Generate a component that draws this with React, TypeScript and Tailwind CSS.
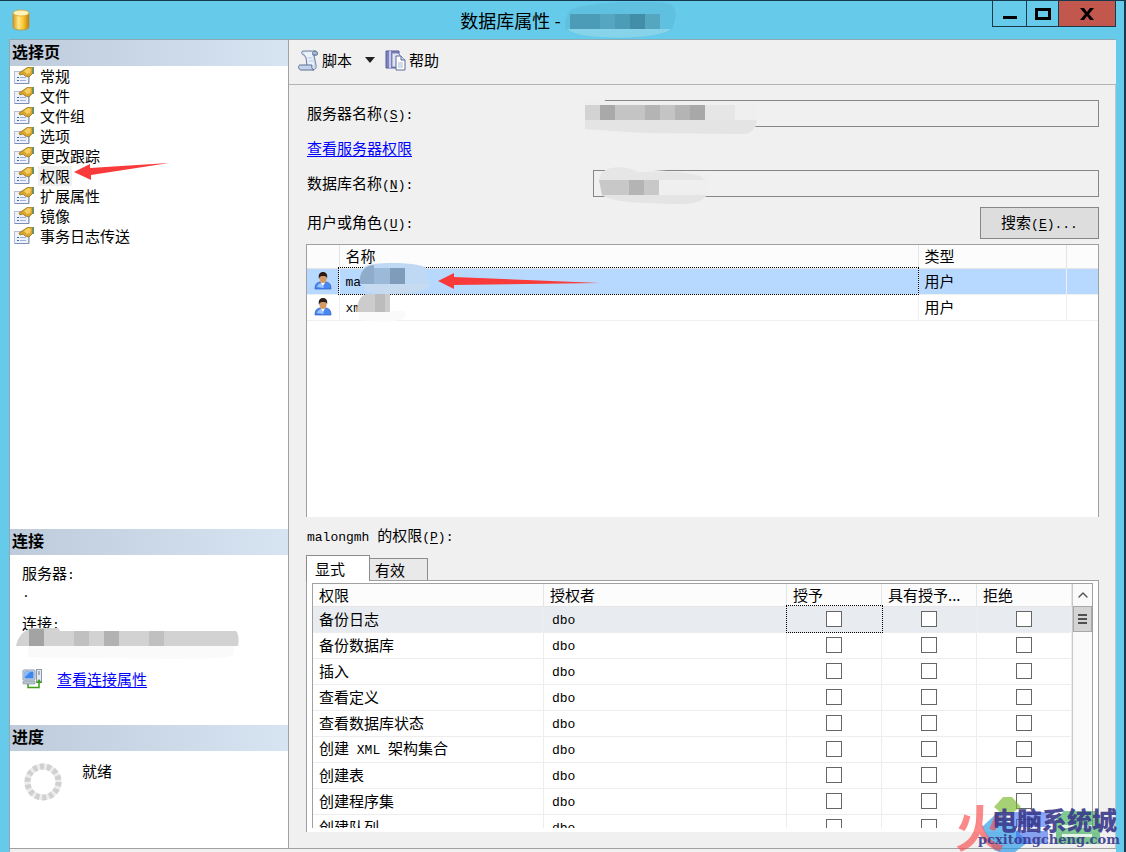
import React from "react";
import { ChevronUp } from "lucide-react";

const pages = [
  "常规",
  "文件",
  "文件组",
  "选项",
  "更改跟踪",
  "权限",
  "扩展属性",
  "镜像",
  "事务日志传送",
];

const users = [
  { name: "ma", type: "用户", selected: true },
  { name: "xm", type: "用户", selected: false },
];

const permissions = [
  "备份日志",
  "备份数据库",
  "插入",
  "查看定义",
  "查看数据库状态",
  "创建 XML 架构集合",
  "创建表",
  "创建程序集",
  "创建队列",
];

const grants = ["授予", "具有授予", "拒绝"];

const Mono = ({ children }: { children: React.ReactNode }) => (
  <span className="whitespace-pre font-['Liberation_Mono',monospace] text-[13px]">
    {children}
  </span>
);

const Hotkey = ({ letter, end = ":" }: { letter: string; end?: string }) => (
  <Mono>
    (<span className="underline underline-offset-2">{letter}</span>){end}
  </Mono>
);

/* Icons */

const DatabaseIcon = () => (
  <svg width="18" height="22" viewBox="0 0 18 22" aria-hidden="true">
    <defs>
      <linearGradient id="db" x1="0" x2="1">
        <stop offset="0" stopColor="#d9971a" />
        <stop offset="0.35" stopColor="#ffe98a" />
        <stop offset="0.65" stopColor="#f7c52f" />
        <stop offset="1" stopColor="#c07c0c" />
      </linearGradient>
    </defs>
    <path d="M1 4v14c0 4 16 4 16 0V4z" fill="url(#db)" stroke="#b98a2c" strokeWidth="0.7" />
    <ellipse cx="9" cy="4" rx="8" ry="3" fill="#fff3b8" stroke="#d8a638" strokeWidth="0.8" />
  </svg>
);

const PageIcon = () => (
  <svg width="20" height="18" viewBox="0 0 20 18" className="shrink-0" aria-hidden="true">
    <rect x="0.5" y="4.5" width="14" height="12" fill="#eef2fb" stroke="#b4bfd6" />
    <path d="M1 16.5h14V5" fill="none" stroke="#7d8fb8" />
    <path d="M3 10.5h2M3 13.5h2" stroke="#4666b8" />
    <path d="M6 10.5h6M6 13.5h6" stroke="#9fb0d8" />
    <path d="M5 6l6-4 3-2h5v6l-4 4-4-1-2-2-3 1z" fill="#d9a52b" stroke="#8b6a1d" strokeWidth="0.7" />
    <path d="M10 4l4-3 3 1-1 4-3 1z" fill="#f3cf62" />
    <path d="M18 0h2v7h-2z" fill="#6f9060" />
  </svg>
);

const ScriptIcon = () => (
  <svg width="21" height="21" viewBox="0 0 21 21" aria-hidden="true">
    <path d="M5 1h12c3 0 3 4 1 4h-2l2 10c1 4-2 5-4 5L9 16 8 8 6 5C3 5 3 1 5 1z" fill="#cfdcf0" stroke="#71839f" />
    <path d="M6 2h9l-1 3 2 10H10L9 7 7 5z" fill="#eaf1fb" />
    <path d="M15 5h4c1-2 0-4-2-4s-3 2-2 4z" fill="#a9bbd8" stroke="#5f7397" />
    <path d="M2 15h12c-1 2 0 4 2 5H3c-3 0-3-5-1-5z" fill="#c3d3eb" stroke="#5f7397" />
    <path d="M10 8h4M11 11h4" stroke="#b5c6e2" />
  </svg>
);

const HelpIcon = () => (
  <svg width="21" height="21" viewBox="0 0 21 21" aria-hidden="true">
    <path d="M1 1h13v17H1z" fill="#7f83bd" stroke="#595d9c" />
    <path d="M4 1h2v17H4z" fill="#c7c9ea" />
    <path d="M7 3h6l2 2v12H7z" fill="#dfe4f5" stroke="#7177a6" strokeWidth="0.8" />
    <path d="M11 6h5l4 4v10h-9z" fill="#fff" stroke="#586a96" />
    <path d="M16 6v4h4" fill="#cdd8ee" stroke="#586a96" />
    <path d="M13 13h5M13 15h5M13 17h5" stroke="#a9b8d8" />
  </svg>
);

const UserIcon = () => (
  <svg width="18" height="18" viewBox="0 0 18 18" className="mx-auto" aria-hidden="true">
    <path d="M1 17c0-5 2-7 6-7h4c4 0 6 2 6 7z" fill="#4b87f0" stroke="#2b5cc4" strokeWidth="0.7" />
    <path d="M3 15c1-3 3-4 5-4l2 5z" fill="#9cc4ff" />
    <path d="M6 9l3 5 3-5z" fill="#fff" />
    <ellipse cx="9" cy="6.500" rx="3.500" ry="4.500" fill="#d39a63" />
    <path d="M5 7C4 2 6 0 9 0s5 2 4 7c0-3-2-3-4-3S6 4 5 7z" fill="#2b1c16" />
  </svg>
);

const ConnectionIcon = () => (
  <svg width="21" height="20" viewBox="0 0 21 20" aria-hidden="true">
    <rect x="1" y="1" width="12" height="10" rx="1" fill="#dce4ee" stroke="#8a99ad" />
    <rect x="2.500" y="2.500" width="9" height="7" fill="#3c86ee" />
    <path d="M3 3h5L3 8z" fill="#8dbcff" />
    <path d="M1 12h12v3H1z" fill="#b9c4d2" stroke="#8593a6" strokeWidth="0.6" />
    <rect x="14.500" y="0.500" width="5" height="13" fill="#e6ebf1" stroke="#8d99a8" />
    <path d="M16 3h2M16 5h2" stroke="#68788e" />
    <path d="M6 15v3.500h11V13" fill="none" stroke="#3f9b1e" strokeWidth="1.500" />
    <path d="M14 14l3-4 3 4z" fill="#3f9b1e" />
  </svg>
);

const Spinner = () => (
  <svg width="38" height="38" viewBox="-19 -19 38 38" aria-hidden="true">
    <circle r="15.500" fill="none" stroke="#ececec" strokeWidth="6" />
    <circle r="15.500" fill="none" stroke="#d0d0d0" strokeWidth="6" strokeDasharray="4.100 2.856" />
  </svg>
);

/* Smudges that hide private names */

const TitleSmudge = () => (
  <svg width="111" height="36" viewBox="0 0 111 36" aria-hidden="true">
    <path d="M5 8C20 0 98-4 107 3c6 5 4 15 0 24-4 10-96 11-107 0C-1 20 2 12 5 8z" fill="#5fc1df" />
    <path d="M2 27h104c-10 11-94 12-104 0z" fill="#86d3ea" />
    <path d="M5 12h90v15H5z" fill="#4c9cb7" />
    <path d="M35 12h15v15H35zM80 12h15v15H80z" fill="#55a6c0" />
    <path d="M65 12h15v15H65z" fill="#428da8" />
  </svg>
);

const ServerSmudge = () => (
  <svg width="172" height="38" viewBox="0 0 172 38" className="absolute -left-2 -top-1" aria-hidden="true">
    <path d="M0 4l20-1v3h152v18l-2 8-14 6-121-1-35-3z" fill="#efefef" />
    <path d="M0 24h172c-1 7-5 14-14 14L60 37 0 33z" fill="#e4e4e4" />
    <path d="M0 9h150v15H0z" fill="#e6e6e6" />
    <path d="M0 9h15v15H0z" fill="#d3d3d3" />
    <path d="M15 9h15v15H15z" fill="#a9a9a9" />
    <path d="M30 9h60v15H30z" fill="#c4c4c4" />
    <path d="M60 9h15v15H60zM90 9h30v15H90z" fill="#b4b4b4" />
    <path d="M105 9h15v15h-15z" fill="#a8a8a8" />
  </svg>
);

const DatabaseSmudge = () => (
  <svg width="112" height="38" viewBox="0 0 112 38" className="absolute left-1 -top-1" aria-hidden="true">
    <path d="M0 8L30 2l80 6v20l-14 8H60L4 27z" fill="#efefef" />
    <path d="M4 8c6-9 28-8 36-2 20 0 60-2 68 8H2z" fill="#e6e6e6" />
    <path d="M4 29h106c-8 12-30 9-60 8-24 0-38-4-46-8z" fill="#e4e4e4" />
    <path d="M2 14h60v15H5z" fill="#c8c8c8" />
    <path d="M32 14h15v15H32z" fill="#b4b4b4" />
  </svg>
);

const ConnectionSmudge = () => (
  <svg width="226" height="36" viewBox="0 0 226 36" className="absolute -left-2 top-[14px]" aria-hidden="true">
    <path d="M14 19h206v8c-4 5-20 6-206 3z" fill="#fafafa" />
    <path d="M2 19C4 9 10 3 18 1h26l2 3h176c3 3 3 10 2 15z" fill="#d2d2d2" />
    <path d="M15 2h15v17H15z" fill="#a3a3a3" />
    <path d="M60 4h15v15H60zM135 4h15v15h-15z" fill="#c0c0c0" />
    <path d="M90 4h15v15H90z" fill="#b2b2b2" />
  </svg>
);

const UserSmudge = ({ selected }: { selected: boolean }) =>
  selected ? (
    <svg width="76" height="34" viewBox="0 0 76 34" className="absolute left-[14px] -top-2" aria-hidden="true">
      <path d="M4 5C12-1 60 0 66 6l4 15c0 12-50 14-66 7z" fill="#bfd9f5" />
      <path d="M4 22h66c-2 12-50 12-64 7z" fill="#c6dbf0" />
      <path d="M0 22C-1 12 3 4 14 3v3h31v16z" fill="#8fadca" />
      <path d="M14 6h16v16H14z" fill="#9bb9d8" />
      <path d="M30 6h15v16H30z" fill="#7f9dba" />
    </svg>
  ) : (
    <svg width="50" height="32" viewBox="0 0 50 32" className="absolute left-[11px] -top-1" aria-hidden="true">
      <path d="M2 19h46v6c-6 6-30 5-46 3z" fill="#fafafa" />
      <path d="M0 20C0 9 4 3 10 2h23v18z" fill="#cccccc" />
      <path d="M18 2h10v18H18z" fill="#bcbcbc" />
    </svg>
  );

const SectionTitle = ({ children }: { children: React.ReactNode }) => (
  <h2 className="flex h-[26px] items-center bg-gradient-to-r from-[#becbda] to-[#d7e4f2] px-[2px] pb-1 text-base font-bold">
    {children}
  </h2>
);

const Sidebar = () => (
  <aside className="flex w-[279px] shrink-0 flex-col border-r border-[#a0a0a0] bg-white">
    <section className="flex-1">
      <SectionTitle>选择页</SectionTitle>
      <ul className="pl-1">
        {pages.map((page) => (
          <li key={page}>
            <button type="button" className="flex h-5 items-center gap-1 leading-5">
              <PageIcon />
              <span
                className={
                  page === "权限" ? "relative bg-[#f0f0f0] px-[2px]" : "px-[2px]"
                }
              >
                {page}
                {page === "权限" && (
                  <svg width="96" height="18" viewBox="0 0 96 18" className="absolute left-9 -top-1" aria-hidden="true">
                    <path d="M0 10L16 2v4L95 1 17 13v5z" fill="#f93a3a" />
                  </svg>
                )}
              </span>
            </button>
          </li>
        ))}
      </ul>
    </section>

    <section>
      <SectionTitle>连接</SectionTitle>
      <div className="px-3 pb-9 pt-2 leading-5">
        <p className="h-5">
          服务器<Mono>:</Mono>
        </p>
        <p className="h-4 leading-4">
          <Mono>.</Mono>
        </p>
        <p className="relative mt-[14px] h-5">
          连接<Mono>:</Mono>
          <ConnectionSmudge />
        </p>
        <div className="mt-9 flex items-center gap-[14px]">
          <ConnectionIcon />
          <a href="#connection" className="text-[#0000ff] underline underline-offset-2">
            查看连接属性
          </a>
        </div>
      </div>
    </section>

    <section className="h-[123px]">
      <SectionTitle>进度</SectionTitle>
      <div className="flex gap-5 pl-[14px] pt-3">
        <Spinner />
        <span className="leading-4">就绪</span>
      </div>
    </section>
  </aside>
);

const UsersTable = () => (
  <div className="min-h-0 flex-[68] overflow-hidden border border-b-0 border-[#a0a0a0] bg-white">
    <table className="w-full table-fixed border-collapse leading-5">
      <colgroup>
        <col className="w-8" />
        <col />
        <col className="w-[148px]" />
        <col className="w-8" />
      </colgroup>
      <thead>
        <tr className="h-[23px] border-b border-[#e5e5e5] bg-[#fcfcfc] text-left">
          <td className="border-r border-[#e5e5e5]" />
          <th className="border-r border-[#e5e5e5] px-[6px] font-normal">名称</th>
          <th className="border-r border-[#e5e5e5] px-[6px] font-normal">类型</th>
          <td />
        </tr>
      </thead>
      <tbody>
        {users.map((user) => (
          <tr
            key={user.name}
            className={
              user.selected
                ? "h-[26px] border-b border-[#f0f0f0] bg-[#b7d9ff]"
                : "h-[26px] border-b border-[#f0f0f0]"
            }
          >
            <td className="border-r border-[#f0f0f0]">
              <UserIcon />
            </td>
            <td
              className={
                user.selected
                  ? "border-r border-[#f0f0f0] px-[6px] outline-1 outline-dotted outline-black"
                  : "border-r border-[#f0f0f0] px-[6px]"
              }
            >
              <div className="relative">
                <Mono>{user.name}</Mono>
                <UserSmudge selected={user.selected} />
                {user.selected && (
                  <svg width="166" height="18" viewBox="0 0 166 18" className="absolute left-[92px] top-[2px]" aria-hidden="true">
                    <path d="M0 9L16 1v4l146 6-146 2v4z" fill="#f93a3a" />
                  </svg>
                )}
              </div>
            </td>
            <td className="border-r border-[#f0f0f0] px-[6px]">{user.type}</td>
            <td />
          </tr>
        ))}
      </tbody>
    </table>
  </div>
);

const PermissionName = ({ name }: { name: string }) => (
  <>
    {name.split(/( XML )/).map((part) =>
      part === " XML " ? <Mono key={part}>{part}</Mono> : part
    )}
  </>
);

const PermissionsTable = () => (
  <div className="min-h-0 flex-[63]">
    <div className="flex h-full border border-b-0 border-[#a0a0a0] bg-white px-[5px] pb-1 pt-[2px]">
      <div className="flex min-w-0 flex-1 overflow-hidden border border-b-0 border-[#a0a0a0]">
        <div className="min-w-0 flex-1">
          <table className="w-full table-fixed border-collapse leading-5">
            <colgroup>
              <col />
              <col className="w-[243px]" />
              <col className="w-[95px]" />
              <col className="w-[95px]" />
              <col className="w-[95px]" />
            </colgroup>
            <thead>
              <tr className="h-[22px] border-b border-[#e5e5e5] bg-[#fcfcfc] text-left">
                <th className="border-r border-[#e5e5e5] px-[6px] font-normal">权限</th>
                <th className="border-r border-[#e5e5e5] px-[6px] font-normal">授权者</th>
                {grants.map((grant) => (
                  <th
                    key={grant}
                    className="whitespace-nowrap border-r border-[#e5e5e5] px-[6px] font-normal"
                  >
                    {grant}
                    {grant === "具有授予" && "..."}
                  </th>
                ))}
              </tr>
            </thead>
            <tbody>
              {permissions.map((name, row) => (
                <tr
                  key={name}
                  className={
                    row === 0
                      ? "h-[26px] border-b border-[#ededed] bg-[#e8ecf0]"
                      : "h-[26px] border-b border-[#ededed]"
                  }
                >
                  <td className="border-r border-[#ededed] px-[6px]">
                    <PermissionName name={name} />
                  </td>
                  <td className="border-r border-[#ededed] px-2">
                    <Mono>dbo</Mono>
                  </td>
                  {grants.map((grant, col) => (
                    <td
                      key={grant}
                      className={
                        row === 0 && col === 0
                          ? "border-r border-[#ededed] outline-1 outline-dotted outline-black"
                          : "border-r border-[#ededed]"
                      }
                    >
                      <input
                        type="checkbox"
                        aria-label={`${name} ${grant}`}
                        className="mx-auto block size-4 appearance-none border border-[#666666] bg-white checked:bg-[#666666]"
                      />
                    </td>
                  ))}
                </tr>
              ))}
            </tbody>
          </table>
        </div>
        <div className="flex w-5 shrink-0 flex-col border-l border-[#c8c8c8] bg-[#fafafa]">
          <button
            type="button"
            aria-label="向上滚动"
            className="flex h-[22px] items-center justify-center text-[#505050]"
          >
            <ChevronUp className="size-4" />
          </button>
          <div className="flex h-[26px] flex-col items-center justify-center gap-px border border-[#a8a8a8] bg-[#d4d4d4]">
            <span className="h-[3px] w-[9px] border-b border-[#d4d4d4] bg-[#505050]" />
            <span className="h-[3px] w-[9px] border-b border-[#d4d4d4] bg-[#505050]" />
            <span className="h-[3px] w-[9px] border-b border-[#d4d4d4] bg-[#505050]" />
          </div>
        </div>
      </div>
    </div>
  </div>
);

const Watermark = () => (
  <div className="pointer-events-none absolute bottom-0 right-0 h-14 w-[168px] overflow-hidden" aria-hidden="true">
    <svg width="168" height="56" viewBox="0 0 168 56" className="absolute inset-0">
      <path d="M38 11L47 1h9l9 10-9 6H45z" fill="#76b82a" opacity="0.65" />
      <path d="M26 31l16-15 30 30-18 14-16-6z" fill="#2196e8" opacity="0.65" />
      <path d="M55 16h38v15H55zM60 35h32v13H60z" fill="#3d6df0" opacity="0.6" />
      <path d="M108 15h32l4 8v25h-44V23z" fill="#3fae5a" opacity="0.65" />
      <path d="M106 29h12v3h-12zM124 29h12v3h-12zM106 38h30v3h-30z" fill="#e5f3e8" />
    </svg>
    <span className="absolute -left-px top-1 text-[50px] font-bold leading-[50px] text-[#fb4b4b] opacity-65">
      火
    </span>
    <span className="absolute left-9 top-[10px] whitespace-nowrap text-[25px] font-black leading-[26px] text-[#3a3a8c] opacity-90">
      电脑系统城
    </span>
    <span className="absolute left-[22px] top-[37px] whitespace-nowrap font-['DejaVu_Serif',serif] text-[13px] font-bold leading-[14px] text-[#3a3a8c] opacity-90">
      pcxitongcheng.com
    </span>
  </div>
);

const MainPane = () => (
  <main className="flex min-w-0 flex-1 flex-col bg-[#f0f0f0]">
    <div className="flex h-[45px] shrink-0 items-center border-b border-[#b4b4b4] pb-1 pl-[9px]">
      <button type="button" className="flex items-center gap-[3px]">
        <ScriptIcon />
        <span>脚本</span>
        <svg width="10" height="6" viewBox="0 0 10 6" className="ml-[10px]" aria-hidden="true">
          <path d="M0 0h10L5 6z" fill="#222" />
        </svg>
      </button>
      <button type="button" className="ml-[10px] flex items-center gap-[3px]">
        <HelpIcon />
        <span>帮助</span>
      </button>
    </div>

    <div className="flex min-h-0 flex-1 flex-col border-r border-[#c4c4c4] pb-4 pl-[17px] pr-4 pt-[15px]">
      <div className="flex h-[27px] shrink-0 items-center">
        <label htmlFor="server" className="w-[287px] shrink-0 pl-px">
          服务器名称
          <Hotkey letter="S" />
        </label>
        <div className="relative h-full flex-1">
          <input id="server" readOnly className="h-full w-full border border-[#868686] bg-[#f0f0f0] px-2" />
          <ServerSmudge />
        </div>
      </div>

      <div className="flex h-[43px] shrink-0 items-center pb-px pl-px">
        <a href="#server-permissions" className="text-[#0000ff] underline underline-offset-2">
          查看服务器权限
        </a>
      </div>

      <div className="flex h-[27px] shrink-0 items-center">
        <label htmlFor="database" className="w-[287px] shrink-0 pl-px">
          数据库名称
          <Hotkey letter="N" />
        </label>
        <div className="relative h-full flex-1">
          <input id="database" readOnly className="h-full w-full border border-[#868686] bg-[#f0f0f0] px-2" />
          <DatabaseSmudge />
        </div>
      </div>

      <div className="flex h-[47px] shrink-0 items-center justify-between pl-px pt-1">
        <span>
          用户或角色
          <Hotkey letter="U" />
        </span>
        <button type="button" className="h-8 w-[119px] border border-[#868686] bg-[#dddddd]">
          搜索
          <Hotkey letter="E" end="..." />
        </button>
      </div>

      <UsersTable />

      <div className="flex h-[38px] shrink-0 items-center pl-px">
        <span>
          <Mono>malongmh </Mono>
          的权限
          <Hotkey letter="P" />
        </span>
      </div>

      <div role="tablist" className="flex h-[25px] shrink-0 items-end">
        <button
          type="button"
          role="tab"
          aria-selected="true"
          className="relative -mb-px h-[26px] w-16 border border-b-0 border-[#8c8c8c] bg-white pl-2 text-left leading-5"
        >
          显式
        </button>
        <button
          type="button"
          role="tab"
          aria-selected="false"
          className="h-[22px] w-[58px] border border-b-0 border-l-0 border-[#8c8c8c] bg-[#e9e9e9] pl-[5px] text-left leading-5"
        >
          有效
        </button>
      </div>
      <PermissionsTable />
    </div>
  </main>
);

export default function App() {
  return (
    <div className="relative flex h-screen w-full flex-col overflow-hidden border-r-2 border-t border-[#17394f] bg-[#66cbea] font-['Noto_Sans_CJK_SC',sans-serif] text-[15px] text-black">
      <header className="grid h-[38px] shrink-0 grid-cols-[1fr_auto_1fr] items-center pl-3 pr-2">
        <DatabaseIcon />
        <div className="ml-2 flex items-center gap-1">
          <h1 className="text-lg">数据库属性 -</h1>
          <TitleSmudge />
        </div>
        <div className="flex h-[26px] self-start justify-self-end">
          <button
            type="button"
            aria-label="最小化"
            className="flex w-[34px] items-center justify-center border border-r-0 border-t-0 border-[#1c3947]"
          >
            <svg width="16" height="12" viewBox="0 0 16 12" aria-hidden="true">
              <path d="M1 8h14v3H1z" />
            </svg>
          </button>
          <button
            type="button"
            aria-label="最大化"
            className="flex w-8 items-center justify-center border border-r-0 border-t-0 border-[#1c3947]"
          >
            <svg width="16" height="12" viewBox="0 0 16 12" aria-hidden="true">
              <path d="M1.500 1.500h13v9h-13z" fill="none" stroke="#000" strokeWidth="3" />
            </svg>
          </button>
          <button
            type="button"
            aria-label="关闭"
            className="flex w-[58px] items-center justify-center border border-t-0 border-[#1c3947] bg-[#c2574d]"
          >
            <svg width="14" height="12" viewBox="0 0 14 12" aria-hidden="true">
              <path d="M0 0h4l3 4 3-4h4L9 6l5 6h-4L7 8l-3 4H0l5-6z" />
            </svg>
          </button>
        </div>
      </header>

      <div className="ml-[9px] mr-2 flex min-h-0 flex-1 flex-col border-l border-t border-[#8fa9b4] bg-[#f0f0f0]">
        <div className="flex min-h-0 flex-1">
          <Sidebar />
          <MainPane />
        </div>
        <div className="h-1 shrink-0 border-t border-[#a0a0a0]" />
      </div>

      <Watermark />
    </div>
  );
}
